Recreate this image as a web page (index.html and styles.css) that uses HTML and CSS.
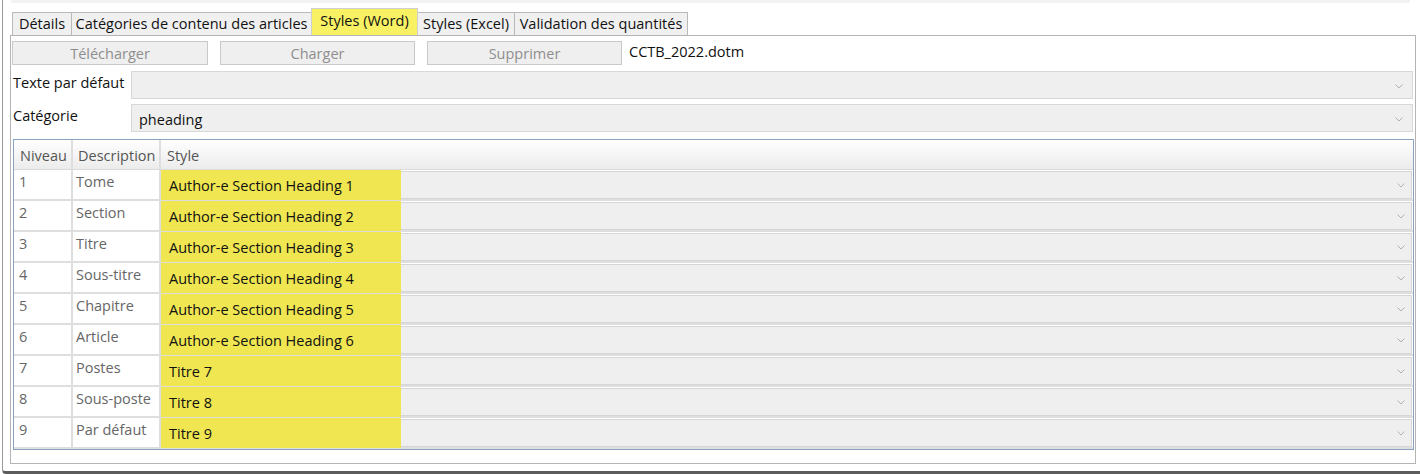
FILE: index.html
```html
<!DOCTYPE html>
<html lang="fr">
<head>
<meta charset="utf-8">
<title>Styles (Word)</title>
<link rel="stylesheet" href="styles.css">
</head>
<body>
<div class="app">
  <div class="topstrip"></div>
  <div class="tabs">
    <div class="tab tab-details">Détails</div>
    <div class="tab tab-cat">Catégories de contenu des articles</div>
    <div class="tab tab-word active">Styles (Word)</div>
    <div class="tab tab-excel">Styles (Excel)</div>
    <div class="tab tab-valid">Validation des quantités</div>
  </div>
  <div class="panel">
    <div class="buttons">
      <button class="btn btn-wide" disabled>Télécharger</button>
      <button class="btn" disabled>Charger</button>
      <button class="btn" disabled>Supprimer</button>
      <span class="filename">CCTB_2022.dotm</span>
    </div>
    <div class="field">
      <div class="field-label">Texte par défaut</div>
      <div class="combo"><span class="combo-text"></span><svg class="chev" width="8" height="5" viewBox="0 0 8 5"><polyline points="0.5,0.5 4,4 7.5,0.5"/></svg></div>
    </div>
    <div class="field">
      <div class="field-label">Catégorie</div>
      <div class="combo"><span class="combo-text">pheading</span><svg class="chev" width="8" height="5" viewBox="0 0 8 5"><polyline points="0.5,0.5 4,4 7.5,0.5"/></svg></div>
    </div>
    <div class="grid">
      <div class="grid-head">
        <div class="cell c1">Niveau</div>
        <div class="cell c2">Description</div>
        <div class="cell c3">Style</div>
      </div>
      <div class="row"><div class="cell c1">1</div><div class="cell c2">Tome</div><div class="cell c3"><div class="style-combo"><span class="hl">Author-e Section Heading 1</span><svg class="chev" width="8" height="5" viewBox="0 0 8 5"><polyline points="0.5,0.5 4,4 7.5,0.5"/></svg></div></div></div>
      <div class="row"><div class="cell c1">2</div><div class="cell c2">Section</div><div class="cell c3"><div class="style-combo"><span class="hl">Author-e Section Heading 2</span><svg class="chev" width="8" height="5" viewBox="0 0 8 5"><polyline points="0.5,0.5 4,4 7.5,0.5"/></svg></div></div></div>
      <div class="row"><div class="cell c1">3</div><div class="cell c2">Titre</div><div class="cell c3"><div class="style-combo"><span class="hl">Author-e Section Heading 3</span><svg class="chev" width="8" height="5" viewBox="0 0 8 5"><polyline points="0.5,0.5 4,4 7.5,0.5"/></svg></div></div></div>
      <div class="row"><div class="cell c1">4</div><div class="cell c2">Sous-titre</div><div class="cell c3"><div class="style-combo"><span class="hl">Author-e Section Heading 4</span><svg class="chev" width="8" height="5" viewBox="0 0 8 5"><polyline points="0.5,0.5 4,4 7.5,0.5"/></svg></div></div></div>
      <div class="row"><div class="cell c1">5</div><div class="cell c2">Chapitre</div><div class="cell c3"><div class="style-combo"><span class="hl">Author-e Section Heading 5</span><svg class="chev" width="8" height="5" viewBox="0 0 8 5"><polyline points="0.5,0.5 4,4 7.5,0.5"/></svg></div></div></div>
      <div class="row"><div class="cell c1">6</div><div class="cell c2">Article</div><div class="cell c3"><div class="style-combo"><span class="hl">Author-e Section Heading 6</span><svg class="chev" width="8" height="5" viewBox="0 0 8 5"><polyline points="0.5,0.5 4,4 7.5,0.5"/></svg></div></div></div>
      <div class="row"><div class="cell c1">7</div><div class="cell c2">Postes</div><div class="cell c3"><div class="style-combo"><span class="hl">Titre 7</span><svg class="chev" width="8" height="5" viewBox="0 0 8 5"><polyline points="0.5,0.5 4,4 7.5,0.5"/></svg></div></div></div>
      <div class="row"><div class="cell c1">8</div><div class="cell c2">Sous-poste</div><div class="cell c3"><div class="style-combo"><span class="hl">Titre 8</span><svg class="chev" width="8" height="5" viewBox="0 0 8 5"><polyline points="0.5,0.5 4,4 7.5,0.5"/></svg></div></div></div>
      <div class="row"><div class="cell c1">9</div><div class="cell c2">Par défaut</div><div class="cell c3"><div class="style-combo"><span class="hl">Titre 9</span><svg class="chev" width="8" height="5" viewBox="0 0 8 5"><polyline points="0.5,0.5 4,4 7.5,0.5"/></svg></div></div></div>
      <div class="grid-fill"></div>
    </div>
  </div>
</div>
</body>
</html>
```

FILE: styles.css
```css
* { box-sizing: border-box; }

html, body {
  margin: 0;
  padding: 0;
  background: #ffffff;
}

body {
  font-family: "Open Sans", "Noto Sans", sans-serif;
  font-size: 14.5px;
  color: #000;
  width: 1420px;
  height: 474px;
  overflow: hidden;
}

.app {
  margin-left: 2px;
  height: 474px;
  border-left: 1px solid #9a9a9a;
  border-bottom: 3px solid #5c5c5c;
  border-bottom-left-radius: 4px;
  padding: 0 4px 7px 7px;
  display: flex;
  flex-direction: column;
}

.topstrip {
  height: 3px;
  background: #f3f3f3;
  margin: 0 6px 5px 1px;
}

.tabs {
  display: flex;
  align-items: flex-end;
  padding-left: 2px;
  height: 27px;
}

.tab {
  height: 23px;
  line-height: 22px;
  text-align: center;
  background: #f0f0f0;
  border: 1px solid #b9b9b9;
  border-bottom: none;
  margin-right: -1px;
  white-space: nowrap;
  color: #111;
}

.tab-details { width: 60px; }
.tab-cat { width: 241px; }
.tab-word { width: 107px; }
.tab-excel { width: 98px; }
.tab-valid { width: 174px; }

.tab.active {
  height: 27px;
  line-height: 24px;
  background: #f7f163;
  border-color: #cfcfcf;
  position: relative;
  z-index: 1;
}

.panel {
  flex: 1;
  border: 1px solid #b4b4b4;
  padding: 5px 2px 1px 1px;
  display: flex;
  flex-direction: column;
}

.buttons {
  display: flex;
  align-items: center;
  gap: 12px;
  height: 24px;
}

.btn {
  width: 195px;
  height: 24px;
  font: inherit;
  background: #efefef;
  border: 1px solid #c9c9c9;
  color: #8e8e8e;
  padding: 0;
}

.btn-wide { width: 196px; }

.filename {
  margin-left: -5px;
  margin-top: -4px;
  color: #111;
}

.field {
  display: flex;
  margin-top: 6px;
}

.field + .field { margin-top: 5px; }

.field-label {
  width: 119px;
  padding-left: 1px;
  padding-top: 2px;
  color: #111;
}

.combo {
  flex: 1;
  height: 28px;
  background: #efefef;
  border: 1px solid #d8d8d8;
  display: flex;
  align-items: center;
  justify-content: space-between;
  padding: 2px 9px 0 7px;
  color: #111;
}

.chev {
  fill: none;
  stroke: #b0b0b0;
  stroke-width: 1;
  flex: none;
}

.grid {
  margin-top: 7px;
  margin-left: 1px;
  width: 1401px;
  border: 1px solid #8aa3c0;
  display: flex;
  flex-direction: column;
}

.grid-head {
  display: flex;
  height: 30px;
  background: linear-gradient(#ffffff, #f6f6f6 45%, #ececec);
  border-bottom: 1px solid #dadada;
}

.grid-head .cell {
  color: #555;
  padding: 6px 0 0 6px;
}

.cell.c1 { width: 59px; border-right: 2px solid #dedede; }
.cell.c2 { width: 88px; border-right: 2px solid #dedede; }
.cell.c3 { flex: 1; }

.grid-head .c2 { padding-left: 5px; }

.row {
  display: flex;
  height: 31px;
  border-bottom: 2px solid #dedede;
  background: #fff;
}

.row .c1, .row .c2 {
  color: #666;
  padding: 2px 0 0 5px;
}

.row .c2 { padding-left: 3px; }

.row .c3 {
  padding: 1px 1px 0 0;
}

.style-combo {
  height: 100%;
  background: #efefef;
  border: 1px solid #d6d6d6;
  border-left: none;
  display: flex;
  align-items: stretch;
  justify-content: space-between;
  padding-right: 6px;
}

.hl {
  width: 240px;
  background: #efe652;
  padding: 6px 0 0 8px;
  color: #111;
  margin-top: -2px;
  margin-bottom: -2px;
}

.style-combo .chev { align-self: center; }

.grid-fill {
  flex: 1;
  background: #ececec;
}
```
